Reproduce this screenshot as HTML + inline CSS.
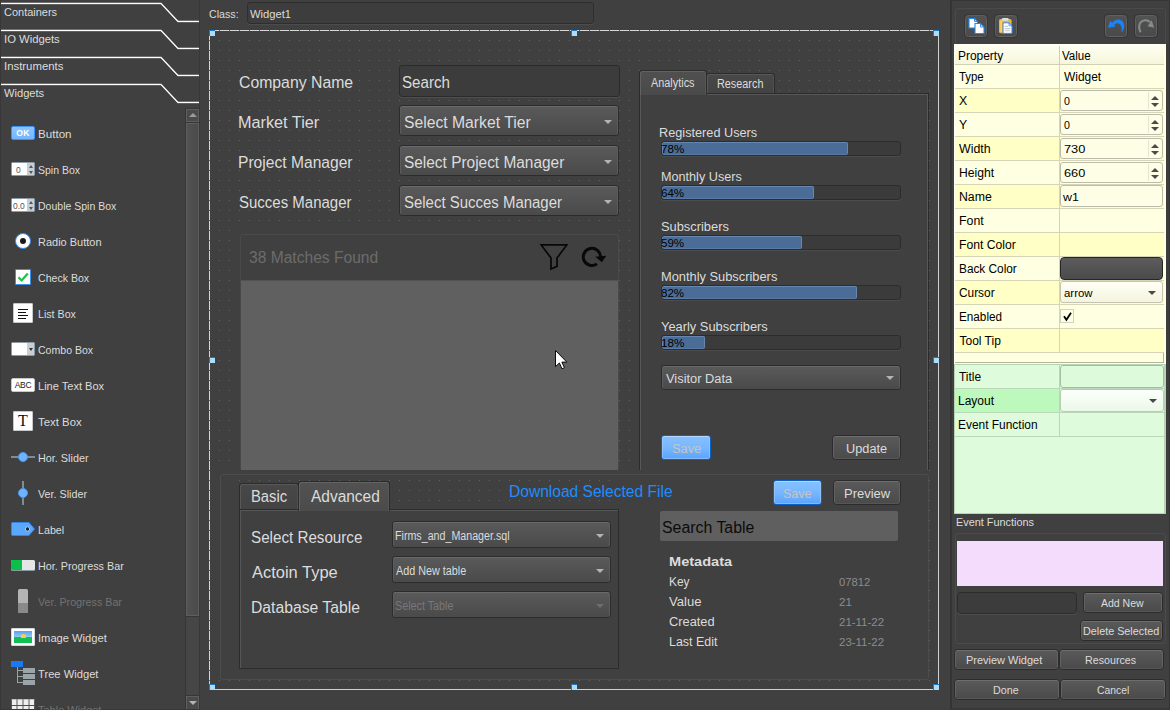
<!DOCTYPE html>
<html>
<head>
<meta charset="utf-8">
<title>Widget Designer</title>
<style>
*{box-sizing:border-box;margin:0;padding:0}
html,body{width:1170px;height:710px;overflow:hidden;background:#404040;font-family:"Liberation Sans",sans-serif;}
.a{position:absolute}
.t{position:absolute;white-space:nowrap;color:#dcdcdc;line-height:1;transform-origin:0 0}
.cb{position:absolute;border:1px solid #2c2c2c;border-radius:3px;background:linear-gradient(#5a5a5a,#4a4a4a);box-shadow:inset 0 1px 0 #6a6a6a,inset 1px 0 0 #5c5c5c,inset -1px 0 0 #5c5c5c}
.ar{position:absolute;width:0;height:0;border-left:4px solid transparent;border-right:4px solid transparent;border-top:4px solid #b4b4b4}
.btn{position:absolute;border:1px solid #2c2c2c;border-radius:3.5px;background:linear-gradient(#5a5a5a,#4a4a4a);box-shadow:inset 0 1px 0 #6e6e6e,inset 0 -1px 0 #565656,inset 1px 0 0 #626262,inset -1px 0 0 #626262}
.bblue{background:linear-gradient(#86c0ff,#78b7ff 50%,#5aa4fb);border:1px solid #0c60cc;border-radius:3px;box-shadow:inset 0 1px 0 #b4d8ff,inset 0 0 0 1px rgba(160,206,255,.55)}
.pb{position:absolute;height:15px;border:1px solid #2c2c2c;border-radius:3px;background:#3b3b3b;box-shadow:0 1px 0 #4c4c4c;overflow:hidden}
.pb i{position:absolute;left:0;top:0;bottom:0;background:#4a6c96;border:1px solid #6587b0;border-bottom-color:#587aa4;border-radius:2px}
.hd{width:6px;height:6px;background:#a9dcfb;border-top:1px solid #1c79c9;border-left:1px solid #1c79c9}
.tb{width:22px;height:22px;border:1px solid #606060;border-radius:3.5px;background:linear-gradient(#525252,#4a4a4a);box-shadow:0 0 0 1px #363636}
.pr{position:absolute;left:955px;width:209px;height:24px;border-bottom:1px solid #d6d6b6}
.pr:before{content:"";position:absolute;left:104px;top:0;bottom:0;width:1px;background:#d6d6b6}
.sp{position:absolute;left:1060px;width:103px;height:21px;border:1px solid #bcbcaa;border-radius:3px;background:#fefee6}
.sp:before{content:"";position:absolute;right:3px;top:4.5px;border-left:4px solid transparent;border-right:4px solid transparent;border-bottom:4px solid #4a4a4a}
.sp:after{content:"";position:absolute;right:3px;bottom:3px;border-left:4px solid transparent;border-right:4px solid transparent;border-top:4px solid #4a4a4a}
</style>
</head>
<body>
<div id="app" style="position:absolute;left:0;top:0;width:1170px;height:710px;overflow:hidden">

<!-- ================= LEFT PANEL ================= -->
<div class="a" style="left:0;top:0;width:200px;height:710px;background:#404040;border-right:1px solid #383838"></div>
<svg class="a" style="left:0;top:0" width="200" height="110" viewBox="0 0 200 110" fill="none">
  <g stroke="#2a2a2a" stroke-width="1">
    <polyline points="0,4.5 161,4.5 178,22.5 199,22.5"/>
    <polyline points="0,31.5 161,31.5 178,49.5 199,49.5"/>
    <polyline points="0,58.5 161,58.5 178,76.5 199,76.5"/>
    <polyline points="0,85.5 161,85.5 178,103.5 199,103.5"/>
  </g>
  <g stroke="#ffffff" stroke-width="1.3">
    <polyline points="1,3.5 161,3.5 178,21.5 199,21.5"/>
    <polyline points="1,30.5 161,30.5 178,48.5 199,48.5"/>
    <polyline points="1,57.5 161,57.5 178,75.5 199,75.5"/>
    <polyline points="1,84.5 161,84.5 178,102.5 199,102.5"/>
  </g>
</svg>
<div class="t" style="left:3.99px;top:7.4px;font-size:11.5px;transform:scaleX(0.954);">Containers</div>
<div class="t" style="left:3.69px;top:34.4px;font-size:11.5px;transform:scaleX(0.980);">IO Widgets</div>
<div class="t" style="left:3.69px;top:61.4px;font-size:11.5px;transform:scaleX(0.989);">Instruments</div>
<div class="t" style="left:4.27px;top:88.4px;font-size:11.5px;transform:scaleX(0.967);">Widgets</div>

<!-- scrollbar -->
<div class="a" style="left:185px;top:108px;width:14px;height:602px;background:#363636"></div>
<div class="a" style="left:186px;top:109px;width:13px;height:13px;background:#4a4a4a;border:1px solid #5e5e5e"></div>
<div class="a" style="left:188.5px;top:113px;border-left:4px solid transparent;border-right:4px solid transparent;border-bottom:4px solid #9a9c9a"></div>
<div class="a" style="left:186px;top:123px;width:13px;height:493px;background:linear-gradient(90deg,#525252,#4a4a4a);border:1px solid #5e5e5e"></div>
<div class="a" style="left:186px;top:617px;width:13px;height:78px;background:#464646"></div>
<div class="a" style="left:186px;top:696px;width:13px;height:14px;background:#4a4a4a;border:1px solid #5e5e5e"></div>
<div class="a" style="left:188.5px;top:701px;border-left:4px solid transparent;border-right:4px solid transparent;border-top:4px solid #b4b4b4"></div>

<!-- list item icons -->
<div class="a" style="left:11px;top:126px;width:24px;height:14px;border-radius:2px;background:linear-gradient(#8cc5ff,#74b6ff);border:1px solid #3d92f7;color:#fff;font-size:8.5px;font-weight:bold;text-align:center;line-height:12.5px;letter-spacing:0.4px">OK</div>
<div class="a" style="left:11px;top:162px;width:24px;height:14px;background:#fff;border:1px solid #8a9aa6;border-radius:1.5px"></div>
<div class="a" style="left:27px;top:163px;width:7px;height:12px;background:#c9ced2"></div>
<div class="a" style="left:28.5px;top:165px;border-left:2px solid transparent;border-right:2px solid transparent;border-bottom:3px solid #555"></div>
<div class="a" style="left:28.5px;top:171px;border-left:2px solid transparent;border-right:2px solid transparent;border-top:3px solid #555"></div>
<div class="a" style="left:16px;top:164.5px;font-size:8.5px;line-height:10px;color:#555">0</div>
<div class="a" style="left:11px;top:198px;width:24px;height:14px;background:#fff;border:1px solid #8a9aa6;border-radius:1.5px"></div>
<div class="a" style="left:27px;top:199px;width:7px;height:12px;background:#c9ced2"></div>
<div class="a" style="left:28.5px;top:201px;border-left:2px solid transparent;border-right:2px solid transparent;border-bottom:3px solid #555"></div>
<div class="a" style="left:28.5px;top:207px;border-left:2px solid transparent;border-right:2px solid transparent;border-top:3px solid #555"></div>
<div class="a" style="left:13px;top:200.5px;font-size:8.5px;line-height:10px;color:#555">0.0</div>
<div class="a" style="left:15px;top:233px;width:16px;height:16px;border-radius:50%;background:#fff;border:1.5px solid #3b8eea"></div>
<div class="a" style="left:20px;top:238px;width:6px;height:6px;border-radius:50%;background:#1a1a1a"></div>
<div class="a" style="left:15px;top:269px;width:16px;height:16px;background:#fff;border:1.5px solid #3b8eea;border-radius:1px"></div>
<svg class="a" style="left:15px;top:269px" width="16" height="16" viewBox="0 0 16 16"><path d="M3.5 8.2 L6.6 11.4 L12.8 4.6" fill="none" stroke="#19c24a" stroke-width="2.2"/></svg>
<div class="a" style="left:13px;top:303px;width:20px;height:20px;background:#fff;border:1px solid #c8c8c8;border-radius:1px"></div>
<svg class="a" style="left:13px;top:303px" width="20" height="20" viewBox="0 0 20 20"><path d="M5 6.5H15M5 9.5H13M5 12.5H15M5 15.5H13" stroke="#111" stroke-width="1.2"/></svg>
<div class="a" style="left:11px;top:342px;width:24px;height:14px;background:#fff;border:1px solid #8a9aa6;border-radius:1.5px"></div>
<div class="a" style="left:27px;top:343px;width:7px;height:12px;background:#c9ced2"></div>
<div class="a" style="left:28.5px;top:348px;border-left:2px solid transparent;border-right:2px solid transparent;border-top:3px solid #333"></div>
<div class="a" style="left:11px;top:378px;width:24px;height:14px;background:#fff;border:1px solid #c8c8c8;border-radius:2px;font-size:8.5px;line-height:12px;text-align:center;color:#222;letter-spacing:-0.3px">ABC</div>
<div class="a" style="left:13px;top:411px;width:20px;height:20px;background:#fff;border:1px solid #c8c8c8;border-radius:1px;font-family:'Liberation Serif',serif;font-size:16px;line-height:18px;text-align:center;color:#111">T</div>
<div class="a" style="left:11px;top:456px;width:24px;height:2px;background:#7d8c97"></div>
<div class="a" style="left:18px;top:452px;width:10px;height:10px;border-radius:50%;background:#6db3ff;border:1px solid #4a98f0"></div>
<div class="a" style="left:22px;top:481px;width:2px;height:24px;background:#7d8c97"></div>
<div class="a" style="left:18px;top:488px;width:10px;height:10px;border-radius:50%;background:#6db3ff;border:1px solid #4a98f0"></div>
<svg class="a" style="left:11px;top:522px" width="24" height="14" viewBox="0 0 24 14"><path d="M1.5 0.5H18L23.5 7L18 13.5H1.5Q0.5 13.5 0.5 12.5V1.5Q0.5 0.5 1.5 0.5Z" fill="#5aa7fb" stroke="#2f86ec" stroke-width="1"/><circle cx="16.5" cy="7" r="2.2" fill="#1c2a3a" stroke="#9fd0ff" stroke-width="1"/></svg>
<div class="a" style="left:11px;top:560px;width:24px;height:10px;background:#e3e6e4;border-radius:1.5px;box-shadow:0 1px 0 #8a9aa0"></div>
<div class="a" style="left:11px;top:560px;width:11px;height:10px;background:#08c04a;border-radius:1.5px 0 0 1.5px"></div>
<div class="a" style="left:18px;top:589px;width:10px;height:24px;background:#b4b4b4;border-radius:1.5px"></div>
<div class="a" style="left:18px;top:603px;width:10px;height:10px;background:#8a8a8a;border-radius:0 0 1.5px 1.5px"></div>
<div class="a" style="left:11px;top:628px;width:24px;height:18px;background:#fff;border:1px solid #d0d8dc;border-radius:1px"></div>
<div class="a" style="left:14px;top:631px;width:18px;height:7px;background:linear-gradient(#5aa0f0,#a6ccf5)"></div>
<div class="a" style="left:14px;top:637px;width:18px;height:6px;background:#10c050"></div>
<div class="a" style="left:21px;top:634px;width:5px;height:4px;border-radius:3px 3px 0 0;background:#f5d43a"></div>
<div class="a" style="left:11px;top:661px;width:12px;height:6px;background:#1979f2"></div>
<div class="a" style="left:17px;top:667px;width:1px;height:16px;background:#9aa4a8"></div>
<div class="a" style="left:17px;top:670px;width:6px;height:1px;background:#9aa4a8"></div>
<div class="a" style="left:17px;top:676px;width:6px;height:1px;background:#9aa4a8"></div>
<div class="a" style="left:17px;top:682px;width:6px;height:1px;background:#9aa4a8"></div>
<div class="a" style="left:23px;top:668px;width:12px;height:5px;background:#9ba5a9"></div>
<div class="a" style="left:23px;top:674px;width:12px;height:5px;background:#9ba5a9"></div>
<div class="a" style="left:23px;top:680px;width:12px;height:5px;background:#9ba5a9"></div>
<svg class="a" style="left:11px;top:699px" width="24" height="11" viewBox="0 0 24 11"><rect x="0" y="0" width="24" height="11" fill="#efefef"/><path d="M0.5 0V11M6 0V11M12 0V11M18 0V11M23.5 0V11" stroke="#5a5a5a" stroke-width="1"/><path d="M0 0.3H24" stroke="#8a8a8a" stroke-width="0.6"/><path d="M0 6.5H24" stroke="#4c4c4c" stroke-width="1"/></svg>
<div class="a" style="left:0;top:709px;width:200px;height:1px;background:#383838"></div>
<div class="a" style="left:0;top:0;width:1px;height:710px;background:#383838"></div>
<div class="t" style="left:37.85px;top:129.3px;font-size:11.5px;transform:scaleX(1.010);">Button</div>
<div class="t" style="left:37.98px;top:165.3px;font-size:11.5px;transform:scaleX(0.914);">Spin Box</div>
<div class="t" style="left:37.89px;top:201.3px;font-size:11.5px;transform:scaleX(0.914);">Double Spin Box</div>
<div class="t" style="left:37.87px;top:237.3px;font-size:11.5px;transform:scaleX(0.955);">Radio Button</div>
<div class="t" style="left:38.1px;top:273.3px;font-size:11.5px;transform:scaleX(0.919);">Check Box</div>
<div class="t" style="left:37.87px;top:309.3px;font-size:11.5px;transform:scaleX(0.926);">List Box</div>
<div class="t" style="left:38.1px;top:345.3px;font-size:11.5px;transform:scaleX(0.917);">Combo Box</div>
<div class="t" style="left:37.87px;top:381.3px;font-size:11.5px;transform:scaleX(0.961);">Line Text Box</div>
<div class="t" style="left:38.21px;top:417.3px;font-size:11.5px;transform:scaleX(0.990);">Text Box</div>
<div class="t" style="left:37.87px;top:453.3px;font-size:11.5px;transform:scaleX(0.941);">Hor. Slider</div>
<div class="t" style="left:38.34px;top:489.3px;font-size:11.5px;transform:scaleX(0.934);">Ver. Slider</div>
<div class="t" style="left:37.87px;top:525.3px;font-size:11.5px;transform:scaleX(0.931);">Label</div>
<div class="t" style="left:37.87px;top:561.3px;font-size:11.5px;transform:scaleX(0.938);">Hor. Progress Bar</div>
<div class="t" style="left:38.34px;top:597.3px;font-size:11.5px;color:#727272;transform:scaleX(0.931);">Ver. Progress Bar</div>
<div class="t" style="left:37.79px;top:633.3px;font-size:11.5px;transform:scaleX(0.969);">Image Widget</div>
<div class="t" style="left:38.21px;top:669.3px;font-size:11.5px;transform:scaleX(0.972);">Tree Widget</div>
<div class="t" style="left:38.21px;top:705.3px;font-size:11.5px;color:#727272;transform:scaleX(0.954);">Table Widget</div>

<!-- ================= CENTER ================= -->
<div class="a" style="left:247px;top:2px;width:347px;height:22px;border:1px solid #2e2e2e;border-radius:3px;background:#3d3d3d;box-shadow:0 1px 0 #4c4c4c"></div>
<div class="t" style="left:208.7px;top:9px;font-size:11.5px;transform:scaleX(0.926);">Class:</div><div class="t" style="left:249.87px;top:9px;font-size:11.5px;transform:scaleX(0.974);">Widget1</div>
<!-- design surface with grid dots -->
<div class="a" style="left:209px;top:30px;width:730px;height:660px;background-color:#404040;background-image:radial-gradient(circle at 0.5px 0.5px,#636363 0.6px,transparent 0.9px);background-size:10px 10px"></div>
<svg class="a" style="left:209px;top:30px" width="730" height="660" viewBox="0 0 730 660" fill="none">
  <path d="M0 0.5H730" stroke="#d6d6d6" stroke-width="1" stroke-dasharray="9 1" stroke-dashoffset="-1"/>
  <path d="M0.5 0V660" stroke="#d6d6d6" stroke-width="1" stroke-dasharray="9 1" stroke-dashoffset="-1"/>
  <path d="M729.5 0V660" stroke="#d0d0d0" stroke-width="1"/>
  <path d="M0 659.5H730" stroke="#d0d0d0" stroke-width="1"/>
</svg>
<div class="a hd" style="left:209px;top:30px"></div>
<div class="a hd" style="left:571px;top:30px"></div>
<div class="a hd" style="left:933px;top:30px"></div>
<div class="a hd" style="left:209px;top:357px"></div>
<div class="a hd" style="left:933px;top:357px"></div>
<div class="a hd" style="left:209px;top:684px"></div>
<div class="a hd" style="left:571px;top:684px"></div>
<div class="a hd" style="left:933px;top:684px"></div>

<!-- search form -->
<div class="a" style="left:399px;top:65px;width:221px;height:32px;border:1px solid #2b2b2b;border-radius:3px;background:#3c3c3c;box-shadow:0 1px 0 #4e4e4e"></div>
<div class="cb" style="left:399px;top:105px;width:220px;height:31px"></div><div class="ar" style="left:603.5px;top:119.5px"></div>
<div class="cb" style="left:399px;top:145px;width:220px;height:31px"></div><div class="ar" style="left:603.5px;top:159.5px"></div>
<div class="cb" style="left:399px;top:185px;width:220px;height:31px"></div><div class="ar" style="left:603.5px;top:199.5px"></div>
<div class="t" style="left:238.61px;top:75.2px;font-size:16px;transform:scaleX(0.987);">Company Name</div><div class="t" style="left:238.42px;top:115.1px;font-size:16px;transform:scaleX(1.015);">Market Tier</div><div class="t" style="left:238.43px;top:155px;font-size:16px;transform:scaleX(0.976);">Project Manager</div><div class="t" style="left:238.57px;top:195.1px;font-size:16px;transform:scaleX(0.937);">Succes Manager</div><div class="t" style="left:401.77px;top:75.2px;font-size:16px;transform:scaleX(0.947);">Search</div><div class="t" style="left:403.65px;top:115.2px;font-size:16px;transform:scaleX(0.982);">Select Market Tier</div><div class="t" style="left:403.67px;top:155.2px;font-size:16px;transform:scaleX(0.964);">Select Project Manager</div><div class="t" style="left:403.67px;top:195.2px;font-size:16px;transform:scaleX(0.935);">Select Succes Manager</div>
<!-- matches list -->
<div class="a" style="left:234px;top:224px;width:385px;height:246px;background:#404040"></div>
<div class="a" style="left:240px;top:234px;width:379px;height:236px;background:#404040;border:1px solid #494949;border-radius:2px"></div>
<div class="a" style="left:241px;top:280px;width:377px;height:190px;background:#606060;border-top:1px solid #525252"></div>
<div class="t" style="left:248.93px;top:250px;font-size:16px;color:#6c6c6c;transform:scaleX(0.975);">38 Matches Found</div>
<svg class="a" style="left:536px;top:240px" width="36" height="34" viewBox="536 240 36 34" fill="none"><path d="M541.2 244.9H566.8L557 258V266.4L551 269V258Z" stroke="#080808" stroke-width="1.7" stroke-linejoin="miter"/></svg>
<svg class="a" style="left:578px;top:243px" width="32" height="28" viewBox="578 243 32 28" fill="none"><path d="M600.5 257.2A8.6 8.6 0 1 0 597 263.9" stroke="#080808" stroke-width="3"/><path d="M595.2 256.8L606.2 255.7L601.9 262.3Z" fill="#080808"/></svg>
<svg class="a" style="left:553px;top:348px" width="18" height="24" viewBox="553 348 18 24"><path d="M555.5 350.5V366.6L559.4 363L562 368.8L564.4 367.7L561.9 362.1H566.8Z" fill="#fff" stroke="#0a0a14" stroke-width="1" stroke-linejoin="miter"/></svg>

<!-- analytics tab widget -->
<div class="a" style="left:639px;top:93px;width:290px;height:377px;background:#404040;border:1px solid #2c2c2c;border-bottom:none;box-shadow:inset 1px 1px 0 #585858,inset -1px 0 0 #585858"></div>
<div class="a" style="left:706px;top:73px;width:69px;height:20px;border:1px solid #2c2c2c;border-bottom:none;border-radius:3px 3px 0 0;background:linear-gradient(#484848,#434343);box-shadow:inset 1px 1px 0 #585858,inset -1px 0 0 #505050"></div>
<div class="a" style="left:639px;top:70px;width:68px;height:25px;border:1px solid #2c2c2c;border-bottom:none;border-radius:3px 3px 0 0;background:linear-gradient(#505050,#4a4a4a);box-shadow:inset 1px 1px 0 #626262,inset -1px 0 0 #585858"></div>
<div class="t" style="left:650.87px;top:77px;font-size:12px;transform:scaleX(0.906);">Analytics</div><div class="t" style="left:716.97px;top:77.9px;font-size:12px;transform:scaleX(0.904);">Research</div><div class="t" style="left:658.99px;top:126.8px;font-size:12px;transform:scaleX(1.059);">Registered Users</div><div class="t" style="left:661.09px;top:171.1px;font-size:12px;transform:scaleX(1.053);">Monthly Users</div><div class="t" style="left:661.15px;top:221.1px;font-size:12px;transform:scaleX(1.071);">Subscribers</div><div class="t" style="left:661.09px;top:271.1px;font-size:12px;transform:scaleX(1.070);">Monthly Subscribers</div><div class="t" style="left:661.37px;top:321.1px;font-size:12px;transform:scaleX(1.072);">Yearly Subscribers</div><div class="pb" style="left:661px;top:141px;width:240px"><i style="width:186px"></i><div class="t" style="left:-0.91px;top:2.2px;font-size:11px;color:#000;transform:scaleX(1.053);">78%</div></div>
<div class="pb" style="left:661px;top:185px;width:240px"><i style="width:152px"></i><div class="t" style="left:-0.85px;top:2.2px;font-size:11px;color:#000;transform:scaleX(1.049);">64%</div></div>
<div class="pb" style="left:661px;top:235px;width:240px"><i style="width:140px"></i><div class="t" style="left:-0.89px;top:2.2px;font-size:11px;color:#000;transform:scaleX(1.051);">59%</div></div>
<div class="pb" style="left:661px;top:285px;width:240px"><i style="width:195px"></i><div class="t" style="left:-0.78px;top:2.2px;font-size:11px;color:#000;transform:scaleX(1.047);">82%</div></div>
<div class="pb" style="left:661px;top:335px;width:240px"><i style="width:43px"></i><div class="t" style="left:-1.08px;top:2.2px;font-size:11px;color:#000;transform:scaleX(1.061);">18%</div></div>

<div class="cb" style="left:661px;top:365px;width:240px;height:25px"></div><div class="ar" style="left:885.5px;top:375.5px"></div>
<div class="btn bblue" style="left:661px;top:435px;width:50px;height:25px"></div>
<div class="btn" style="left:832px;top:435px;width:69px;height:25px"></div>
<div class="t" style="left:666.07px;top:372.9px;font-size:12px;transform:scaleX(1.072);">Visitor Data</div><div class="t" style="left:671.75px;top:442.9px;font-size:12px;color:#c9c4bc;transform:scaleX(1.066);">Save</div><div class="t" style="left:845.62px;top:442.9px;font-size:12px;transform:scaleX(1.062);">Update</div>
<!-- bottom group -->
<div class="a" style="left:210px;top:470px;width:719px;height:210px;background:#404040"></div>
<div class="a" style="left:220px;top:474px;width:709px;height:206px;border:1px solid #4c4c4c;border-radius:3px"></div>
<div class="a" style="left:234px;top:476px;width:384px;height:34px;background-color:#404040;background-image:radial-gradient(circle at 0.5px 0.5px,#636363 0.6px,transparent 0.9px);background-size:10px 10px;background-position:5px 4px"></div>
<div class="a" style="left:239px;top:509px;width:380px;height:160px;background:#404040;border:1px solid #2c2c2c;box-shadow:inset 1px 1px 0 #565656"></div>
<div class="a" style="left:239px;top:483px;width:60px;height:26px;border:1px solid #2c2c2c;border-bottom:none;border-radius:3px 3px 0 0;background:linear-gradient(#484848,#434343);box-shadow:inset 1px 1px 0 #585858,inset -1px 0 0 #505050"></div>
<div class="a" style="left:298px;top:481px;width:92px;height:30px;border:1px solid #2c2c2c;border-bottom:none;border-radius:3px 3px 0 0;background:linear-gradient(#525252,#4b4b4b);box-shadow:inset 1px 1px 0 #626262,inset -1px 0 0 #585858"></div>
<div class="t" style="left:250.64px;top:489.4px;font-size:16px;transform:scaleX(0.925);">Basic</div><div class="t" style="left:311.11px;top:488.6px;font-size:16px;transform:scaleX(0.967);">Advanced</div><div class="t" style="left:250.77px;top:529.5px;font-size:16px;transform:scaleX(0.949);">Select Resource</div><div class="t" style="left:251.51px;top:564.6px;font-size:16px;transform:scaleX(1.029);">Actoin Type</div><div class="t" style="left:250.83px;top:599.6px;font-size:16px;transform:scaleX(0.982);">Database Table</div>
<div class="cb" style="left:392px;top:521px;width:219px;height:27px"></div><div class="ar" style="left:595.5px;top:533.5px"></div>
<div class="cb" style="left:392px;top:556px;width:219px;height:27px"></div><div class="ar" style="left:595.5px;top:568.5px"></div>
<div class="cb" style="left:392px;top:591px;width:219px;height:27px"></div><div class="ar" style="left:595.5px;top:603.5px;border-top-color:#6e6e6e"></div>
<div class="t" style="left:395.27px;top:530px;font-size:12px;transform:scaleX(0.890);">Firms_and_Manager.sql</div><div class="t" style="left:395.77px;top:564.9px;font-size:12px;transform:scaleX(0.900);">Add New table</div><div class="t" style="left:395.35px;top:599.8px;font-size:12px;color:#787878;transform:scaleX(0.897);">Select Table</div><div class="t" style="left:508.83px;top:483.8px;font-size:16px;color:#1e8cff;transform:scaleX(0.973);">Download Selected File</div>
<div class="btn bblue" style="left:773px;top:480px;width:49px;height:25px"></div>
<div class="btn" style="left:833px;top:480px;width:68px;height:25px"></div>
<div class="a" style="left:660px;top:511px;width:238px;height:30px;background:#5f5f5f;border-radius:2px"></div>
<div class="t" style="left:783.17px;top:487.7px;font-size:12px;color:#c9c4bc;transform:scaleX(1.043);">Save</div><div class="t" style="left:843.79px;top:487.7px;font-size:12px;transform:scaleX(1.082);">Preview</div><div class="t" style="left:661.95px;top:519.9px;font-size:16px;color:#0c0c0c;transform:scaleX(0.992);">Search Table</div><div class="t" style="left:668.83px;top:556.1px;font-size:12px;font-weight:700;transform:scaleX(1.213);">Metadata</div><div class="t" style="left:668.82px;top:575.7px;font-size:12px;transform:scaleX(0.992);">Key</div><div class="t" style="left:669.38px;top:595.7px;font-size:12px;transform:scaleX(1.088);">Value</div><div class="t" style="left:669.01px;top:615.7px;font-size:12px;transform:scaleX(1.069);">Created</div><div class="t" style="left:668.79px;top:635.7px;font-size:12px;transform:scaleX(1.036);">Last Edit</div><div class="t" style="left:838.76px;top:577.1px;font-size:10.5px;color:#8c8c8c;transform:scaleX(1.067);">07812</div><div class="t" style="left:838.67px;top:597.1px;font-size:10.5px;color:#8c8c8c;transform:scaleX(1.108);">21</div><div class="t" style="left:838.67px;top:617.1px;font-size:10.5px;color:#8c8c8c;transform:scaleX(1.092);">21-11-22</div><div class="t" style="left:838.67px;top:637.1px;font-size:10.5px;color:#8c8c8c;transform:scaleX(1.092);">23-11-22</div>
<!-- ================= RIGHT PANEL ================= -->
<div class="a" style="left:950px;top:0;width:220px;height:710px;background:#404040;border-left:2px solid #343434;border-bottom:2px solid #383838"></div>
<div class="a" style="left:1166px;top:44px;width:3px;height:470px;background:#3c3c3c"></div>
<div class="a" style="left:1169px;top:0;width:1px;height:710px;background:#353535"></div>
<div class="a" style="left:950px;top:0;width:220px;height:1px;background:#363636"></div>
<div class="a" style="left:955px;top:8px;width:211px;height:40px;border:1px solid #4a4a4a;border-radius:3px"></div>
<div class="a tb" style="left:965px;top:15px"></div>
<div class="a tb" style="left:995px;top:15px"></div>
<div class="a tb" style="left:1105px;top:15px"></div>
<div class="a tb" style="left:1135px;top:15px"></div>
<svg class="a" style="left:965px;top:15px" width="22" height="22" viewBox="965 15 22 22"><path d="M969 18.5H974.5L977.5 21.5V28H969Z" fill="#fff" stroke="#2385f0" stroke-width="1.1"/><path d="M974.5 18.5V21.5H977.5" fill="none" stroke="#2385f0" stroke-width="0.9"/><path d="M975 23.5H980.5L984 27V33.5H975Z" fill="#fff" stroke="#2385f0" stroke-width="1.1"/><path d="M980.5 23.5V27H984" fill="none" stroke="#2385f0" stroke-width="0.9"/></svg>
<svg class="a" style="left:995px;top:15px" width="22" height="22" viewBox="995 15 22 22"><rect x="999" y="19" width="12.6" height="14.2" rx="1.6" fill="#f2b335"/><rect x="1000.4" y="20.4" width="1.6" height="11.6" fill="#f8d66a"/><rect x="1002" y="17.9" width="6.6" height="2.8" rx="0.8" fill="#dcdfe2"/><path d="M1003 22.8H1009L1012 25.8V33.4H1003Z" fill="#fff" stroke="#2a86f0" stroke-width="1"/><path d="M1009 22.8V25.8H1012" fill="none" stroke="#2a86f0" stroke-width="0.8"/><path d="M1004.6 26.4H1008M1004.6 28.6H1010.4M1004.6 30.8H1010.4" stroke="#c4c8cc" stroke-width="1.1"/></svg>
<svg class="a" style="left:1105px;top:15px" width="22" height="22" viewBox="1105 15 22 22"><path d="M1107.9 27.8L1110.2 20.8L1112.3 22.7C1116 18.2 1122 18.6 1123.8 23.5C1125 27 1123.6 30.6 1121.3 32.6C1122.2 29 1121.8 25.6 1119.6 23.9C1117.6 22.6 1115.6 23.4 1114.3 24.7L1115.4 26.8Z" fill="#1a82fb"/></svg>
<svg class="a" style="left:1135px;top:15px" width="22" height="22" viewBox="1135 15 22 22"><path d="M1140.6 32.2C1137.6 27 1139.4 20.6 1145.2 20.2C1147.4 20.1 1149 21 1150 22.2" fill="none" stroke="#848b8b" stroke-width="2"/><path d="M1147.6 26.2L1151.6 20.2L1154.2 27.8Z" fill="#848b8b"/></svg>
<!-- yellow table -->
<div class="a" style="left:954px;top:44px;width:212px;height:320px;background:#ffffe1;border:1px solid #fffff6"></div>
<div class="a" style="left:955px;top:45px;width:209px;height:318px;border-right:1px solid #b4b498;border-bottom:1px solid #b4b498"></div>
<div class="a" style="left:955px;top:45px;width:209px;height:20px;background:linear-gradient(#fffff2,#f6f6dc);border-bottom:1px solid #d0d0b2"></div>
<div class="a" style="left:1059px;top:46px;width:1px;height:18px;background:#d0d0b2"></div>
<!-- green table -->
<div class="a" style="left:954px;top:364px;width:212px;height:150px;background:#defcdc;border:1px solid #b4d4b2;border-right:2px solid #b4d4b2"></div>
<div class="pr" style="top:65px;background:#ffffe1"></div><div class="t" style="left:959.48px;top:70.9px;font-size:12px;color:#000;transform:scaleX(0.949);">Type</div>
<div class="pr" style="top:89px;background:#ffffc6"></div><div class="t" style="left:959.16px;top:94.9px;font-size:12px;color:#000;transform:scaleX(1.027);">X</div>
<div class="pr" style="top:113px;background:#ffffe1"></div><div class="t" style="left:959.2px;top:118.9px;font-size:12px;color:#000;transform:scaleX(1.021);">Y</div>
<div class="pr" style="top:137px;background:#ffffc6"></div><div class="t" style="left:958.9px;top:142.9px;font-size:12px;color:#000;transform:scaleX(1.030);">Width</div>
<div class="pr" style="top:161px;background:#ffffe1"></div><div class="t" style="left:958.91px;top:166.9px;font-size:12px;color:#000;transform:scaleX(1.011);">Height</div>
<div class="pr" style="top:185px;background:#ffffc6"></div><div class="t" style="left:958.89px;top:190.9px;font-size:12px;color:#000;transform:scaleX(1.023);">Name</div>
<div class="pr" style="top:209px;background:#ffffe1"></div><div class="t" style="left:958.89px;top:214.9px;font-size:12px;color:#000;transform:scaleX(1.027);">Font</div>
<div class="pr" style="top:233px;background:#ffffc6"></div><div class="t" style="left:958.91px;top:238.9px;font-size:12px;color:#000;transform:scaleX(1.015);">Font Color</div>
<div class="pr" style="top:257px;background:#ffffe1"></div><div class="t" style="left:958.92px;top:262.9px;font-size:12px;color:#000;transform:scaleX(0.985);">Back Color</div>
<div class="pr" style="top:281px;background:#ffffc6"></div><div class="t" style="left:959.17px;top:286.9px;font-size:12px;color:#000;transform:scaleX(0.988);">Cursor</div>
<div class="pr" style="top:305px;background:#ffffe1"></div><div class="t" style="left:958.93px;top:310.9px;font-size:12px;color:#000;transform:scaleX(0.977);">Enabled</div>
<div class="pr" style="top:329px;background:#ffffc6"></div><div class="t" style="left:959.47px;top:334.9px;font-size:12px;color:#000;">Tool Tip</div>
<div class="t" style="left:958.02px;top:49.7px;font-size:12px;color:#000;transform:scaleX(0.995);">Property</div><div class="t" style="left:1062.37px;top:49.7px;font-size:12px;color:#000;transform:scaleX(0.960);">Value</div><div class="t" style="left:1063.52px;top:70.9px;font-size:12px;color:#000;transform:scaleX(0.995);">Widget</div><div class="sp" style="top:90px"></div><div class="a" style="left:1148px;top:92px;width:1px;height:17px;background:#e4e4d0"></div><div class="t" style="left:1064.47px;top:95.9px;font-size:11.5px;color:#000;transform:scaleX(0.924);">0</div>
<div class="sp" style="top:114px"></div><div class="a" style="left:1148px;top:116px;width:1px;height:17px;background:#e4e4d0"></div><div class="t" style="left:1064.47px;top:119.9px;font-size:11.5px;color:#000;transform:scaleX(0.924);">0</div>
<div class="sp" style="top:138px"></div><div class="a" style="left:1148px;top:140px;width:1px;height:17px;background:#e4e4d0"></div><div class="t" style="left:1064.24px;top:143.9px;font-size:11.5px;color:#000;transform:scaleX(1.112);">730</div>
<div class="sp" style="top:162px"></div><div class="a" style="left:1148px;top:164px;width:1px;height:17px;background:#e4e4d0"></div><div class="t" style="left:1064.32px;top:167.9px;font-size:11.5px;color:#000;transform:scaleX(1.107);">660</div>

<div class="a" style="left:1060px;top:185px;width:103px;height:22px;border:1px solid #bcbcaa;border-radius:3px;background:#fefee6"></div>
<div class="a" style="left:1060px;top:257px;width:103px;height:23px;border:1px solid #262626;border-radius:4px;background:linear-gradient(#5c5c5c,#4b4b4b)"></div>
<div class="a" style="left:1060px;top:281px;width:103px;height:22px;border:1px solid #c4c4b0;border-radius:3px;background:linear-gradient(#fffff6,#f4f4de)"></div>
<div class="ar" style="left:1147.5px;top:290.5px;border-top-color:#484848"></div>
<div class="a" style="left:1060px;top:309px;width:14px;height:14px;background:#ffffe8;border:1px solid #d2d2c0"></div>
<svg class="a" style="left:1060.5px;top:309.5px" width="13" height="13" viewBox="0 0 13 13"><path d="M3 6.2L5.4 9.8L10 2.8" fill="none" stroke="#000" stroke-width="1.8"/></svg>
<div class="t" style="left:1062.52px;top:191.9px;font-size:11.5px;color:#000;transform:scaleX(1.081);">w1</div><div class="t" style="left:1064.22px;top:287.9px;font-size:11.5px;color:#000;transform:scaleX(0.993);">arrow</div>
<div class="pr" style="top:365px;background:#defcdc;border-color:#bcd6ba"></div>
<div class="pr" style="top:389px;background:linear-gradient(90deg,#bdf8bd 0,#bdf8bd 104px,#defcdc 104px);border-color:#bcd6ba"></div>
<div class="pr" style="top:413px;background:#defcdc;border-color:#bcd6ba"></div>
<div class="a" style="left:1059px;top:365px;width:1px;height:72px;background:#bcd6ba"></div>
<div class="a" style="left:1060px;top:365px;width:104px;height:23px;border:1px solid #a4bea2;border-radius:3px;background:#ddfbdb"></div>
<div class="a" style="left:1060px;top:389px;width:104px;height:23px;border:1px solid #b8ccb6;border-radius:3px;background:linear-gradient(#fdfffc,#eaf8e8)"></div>
<div class="ar" style="left:1148.5px;top:398.5px;border-top-color:#484848"></div>
<div class="t" style="left:958.57px;top:370.9px;font-size:12px;color:#000;transform:scaleX(0.995);">Title</div><div class="t" style="left:958.01px;top:394.9px;font-size:12px;color:#000;">Layout</div><div class="t" style="left:958.02px;top:418.6px;font-size:12px;color:#000;transform:scaleX(0.994);">Event Function</div><div class="t" style="left:956.17px;top:517.1px;font-size:11.5px;transform:scaleX(0.946);">Event Functions</div>
<div class="a" style="left:955px;top:533px;width:211px;height:111px;border:1px solid #4b4b4b;border-radius:3px"></div>
<div class="a" style="left:957px;top:541px;width:206px;height:45px;background:#f3dcfc"></div>
<div class="a" style="left:957px;top:592px;width:120px;height:22px;border:1px solid #2c2c2c;border-radius:4px;background:#3c3c3c;box-shadow:0 1px 0 #4e4e4e"></div>
<div class="btn" style="left:1083px;top:592px;width:80px;height:21px"></div>
<div class="btn" style="left:1080px;top:620px;width:83px;height:21px"></div>
<div class="btn" style="left:954px;top:649px;width:105px;height:21px"></div>
<div class="btn" style="left:1059px;top:649px;width:105px;height:21px"></div>
<div class="btn" style="left:954px;top:679px;width:106px;height:21px"></div>
<div class="btn" style="left:1060px;top:679px;width:106px;height:21px"></div>
<div class="t" style="left:1101.07px;top:597.9px;font-size:11.5px;transform:scaleX(0.914);">Add New</div><div class="t" style="left:1083.07px;top:625.8px;font-size:11.5px;transform:scaleX(0.938);">Delete Selected</div><div class="t" style="left:966.07px;top:655px;font-size:11.5px;transform:scaleX(0.954);">Preview Widget</div><div class="t" style="left:1084.97px;top:655px;font-size:11.5px;transform:scaleX(0.929);">Resources</div><div class="t" style="left:993.17px;top:684.8px;font-size:11.5px;transform:scaleX(0.935);">Done</div><div class="t" style="left:1096.52px;top:684.8px;font-size:11.5px;transform:scaleX(0.903);">Cancel</div>
</div>
</body>
</html>
